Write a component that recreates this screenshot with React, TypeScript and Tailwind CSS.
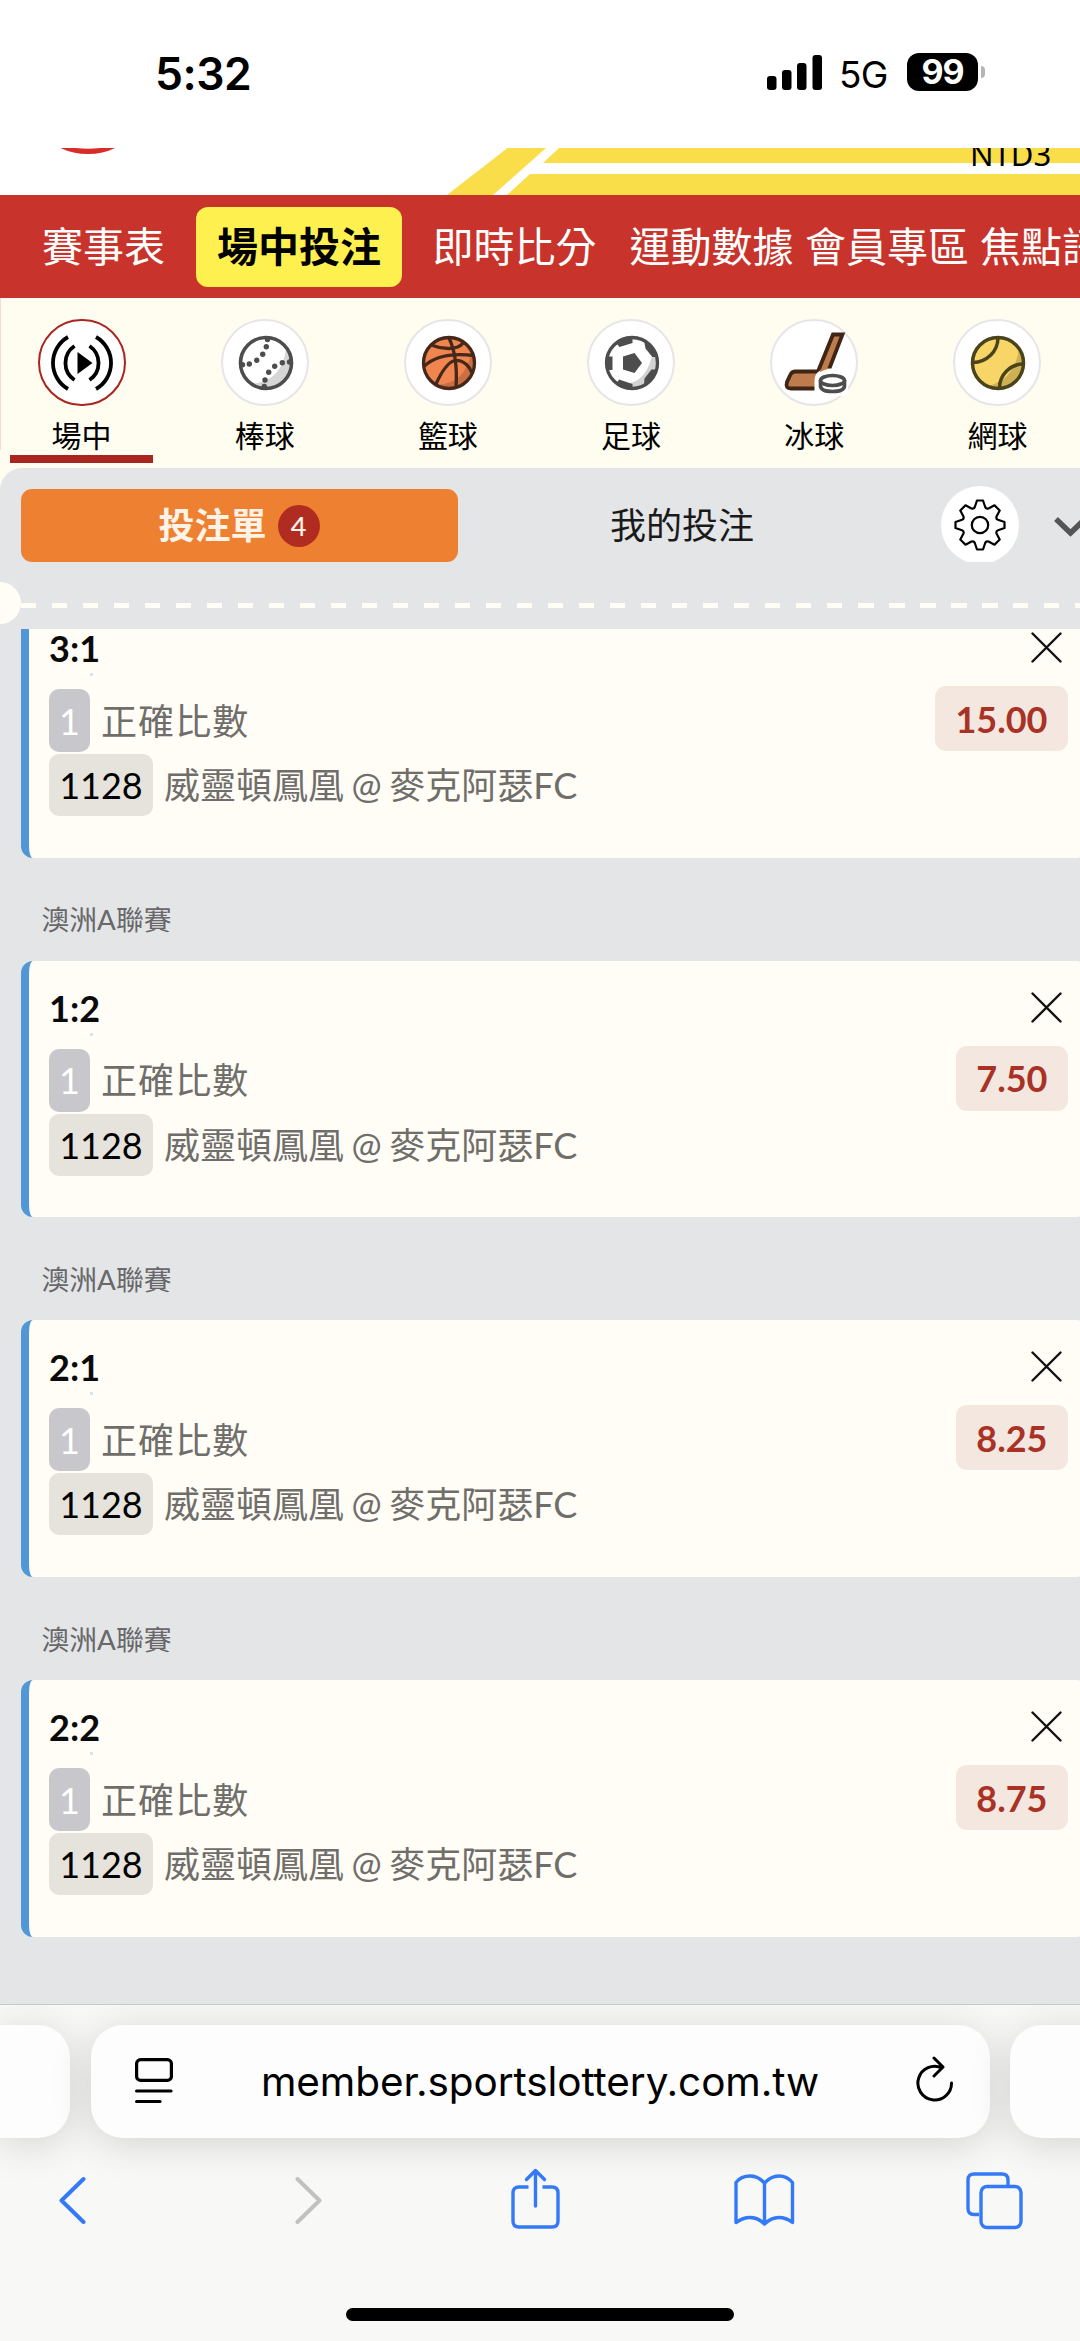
import React from "react";

const SANS = "font-['Lato','Noto_Sans_CJK_TC',sans-serif]";

const bets = [
  { score: "3:1", odds: "15.00" },
  { score: "1:2", odds: "7.50" },
  { score: "2:1", odds: "8.25" },
  { score: "2:2", odds: "8.75" },
];

function StatusBar() {
  return (
    <div className="flex h-[148px] shrink-0 items-start bg-white pl-[155px] pr-[95px] pt-[53px] font-['Inter',sans-serif] text-black">
      <div className="text-[44.500px] font-semibold leading-[42px] tracking-[-0.500px]">5:32</div>
      <svg className="ml-auto mt-[2px]" width="56" height="35" viewBox="0 0 56 35">
        <rect x="0" y="21" width="9.5" height="14" rx="3" />
        <rect x="15" y="15" width="9.5" height="20" rx="3" />
        <rect x="30" y="8" width="9.5" height="27" rx="3" />
        <rect x="45.500" y="0" width="9.5" height="35" rx="3" />
      </svg>
      <div className="ml-[16px] w-[68px] text-[37px] leading-[43px] tracking-[-0.800px]">5G</div>
      <div className="flex h-[38px] w-[71px] items-center justify-center rounded-[12px] bg-black text-[34px] font-bold leading-none tracking-[-1px] text-white">
        99
      </div>
      <div className="ml-[3px] mt-[13px] h-[12px] w-[4px] rounded-r-full bg-[#b5b5b5]" />
    </div>
  );
}

function Banner() {
  return (
    <div className="relative h-[47px] shrink-0 overflow-hidden bg-white">
      <svg className="block" width="1080" height="47" viewBox="0 0 1080 47">
        <path d="M507.500 0H546L493 47H447Z" fill="#f9de4a" />
        <path d="M559 0H1080V15H543Z" fill="#f9de4a" />
        <path d="M530 26H1080V47H507Z" fill="#f9de4a" />
        <path d="M60.500 0H115Q103 6 88 6Q73 6 60.500 0Z" fill="#d92b27" />
        <path d="M76 0H100Q88 1.500 76 0Z" fill="#fff" />
      </svg>
      <div className="absolute -top-[15px] left-[970px] font-['Noto_Sans',sans-serif] text-[31px] leading-[43px] text-black">
        NTD3
      </div>
    </div>
  );
}

function Nav() {
  return (
    <nav
      className={`flex h-[103px] shrink-0 items-center overflow-hidden whitespace-nowrap bg-[#c8342b] pl-[42px] text-[41px] leading-none text-white ${SANS}`}
    >
      <span className="w-[154px] shrink-0">賽事表</span>
      <span className="flex h-[80px] w-[206px] shrink-0 items-center justify-center rounded-[12px] bg-[#fef04e] font-bold text-black">
        場中投注
      </span>
      <span className="ml-[30.500px] w-[197px] shrink-0">即時比分</span>
      <span className="w-[175.500px] shrink-0">運動數據</span>
      <span className="w-[175px] shrink-0">會員專區</span>
      <span className="shrink-0">焦點訊息</span>
    </nav>
  );
}

function LiveIcon() {
  return (
    <svg width="62" height="56" viewBox="0 0 62 56" fill="none" stroke="#000" strokeWidth="3.800">
      <path d="M17 2A30 30 0 0 0 17 54M23.500 11A20.500 20.500 0 0 0 23.500 45M45 2A30 30 0 0 1 45 54M38.500 11A20.500 20.500 0 0 1 38.500 45" />
      <path d="M26.500 17L41.500 28L26.500 39Z" fill="#000" stroke="none" />
    </svg>
  );
}

function BaseballIcon() {
  return (
    <svg className="ml-[2px]" width="56" height="56" viewBox="0 0 56 56" fill="none">
      <circle cx="28" cy="28" r="25.500" fill="#fff" />
      <path d="M50 14A26 26 0 0 1 14 49Q44 46 48 14Z" fill="#d6d6d6" />
      <circle cx="28" cy="28" r="25.500" stroke="#4d4d4d" strokeWidth="3.600" />
      <g fill="#4d4d4d">
        <circle cx="29.500" cy="4.500" r="2.700" /><circle cx="28.300" cy="11.700" r="2.700" /><circle cx="24.700" cy="19.300" r="2.700" />
        <circle cx="18.700" cy="25.300" r="2.700" /><circle cx="11.300" cy="29" r="2.700" /><circle cx="4.500" cy="29.800" r="2.700" />
        <circle cx="51.500" cy="27" r="2.700" /><circle cx="44.300" cy="27.700" r="2.700" /><circle cx="36.700" cy="31.300" r="2.700" />
        <circle cx="30.700" cy="37.300" r="2.700" /><circle cx="27" cy="45" r="2.700" /><circle cx="26.300" cy="51.500" r="2.700" />
      </g>
    </svg>
  );
}

function BasketballIcon() {
  return (
    <svg className="ml-[2px]" width="56" height="56" viewBox="0 0 56 56" fill="none">
      <circle cx="28" cy="28" r="25.500" fill="#f0854f" />
      <path d="M53 22A25 25 0 0 1 16 50Q45 48 50 18Z" fill="#c96f42" />
      <g stroke="#45281a" strokeWidth="3.300">
        <circle cx="28" cy="28" r="25.500" />
        <path d="M28 3Q37 22 35 52M10 10C20 14 36 16 42 8M3.500 31C14 21 32 18 53 20.500M15 49C20 38 27 27 34 25.500C43 25 49 32 51 38" />
      </g>
    </svg>
  );
}

function SoccerIcon() {
  return (
    <svg className="ml-[2px]" width="56" height="56" viewBox="0 0 56 56" fill="none">
      <circle cx="28" cy="28" r="25.500" fill="#fff" />
      <path d="M50 16A25 25 0 0 1 26 53V48Q44 44 49 16Z" fill="#d3d3d3" />
      <g fill="#4d4d4d">
        <path d="M19 21.500L30.500 18L38 28L30.500 38L19 34.500Z" />
        <path d="M13 9Q20 3 28.500 2.500V8L15.500 12Z" />
        <path d="M40 5Q50 11 53.500 22L48.300 22L41.500 13.500Z" />
        <path d="M53.500 34.500Q50 46 40 51L40.500 43.500L47.500 34.500Z" />
        <path d="M13 47.500Q20 53 28.500 53.500V49L15 44.500Z" />
        <path d="M2.500 21.500H8.500V35H2.500Z" />
      </g>
      <circle cx="28" cy="28" r="25.500" stroke="#4d4d4d" strokeWidth="3.300" />
    </svg>
  );
}

function HockeyIcon() {
  return (
    <svg width="68" height="66" viewBox="-2 0 68 66" fill="none">
      <path d="M51 4.500H60.500L46 42Q42 58 34 58.500H9Q3 58.500 5 52L8.500 44.500Q10 41.500 13.500 41.500H36Z" fill="#be7c4c" stroke="#3e2516" strokeWidth="3.800" />
      <path d="M32.500 66V50Q33 38 50 38.500H66V66Z" fill="#fff" />
      <path d="M38.500 39.500L44 37.500L50 38.500Q42 39 38 42.500Z" fill="#be7c4c" />
      <path d="M38.500 50V56Q39 61.500 50.500 61.500Q62 61.500 62.500 56V50" fill="#fff" stroke="#4d4d4d" strokeWidth="3.600" />
      <ellipse cx="50.500" cy="50.500" rx="12" ry="5" fill="#fff" stroke="#4d4d4d" strokeWidth="3.600" />
    </svg>
  );
}

function TennisIcon() {
  return (
    <svg className="ml-[2px]" width="56" height="56" viewBox="0 0 56 56" fill="none">
      <circle cx="28" cy="28" r="25.500" fill="#f7d667" />
      <path d="M51 16A26 26 0 0 1 17 51Q44 46 49 14Z" fill="#cfb155" />
      <g stroke="#4b431c" strokeWidth="3.500">
        <circle cx="28" cy="28" r="25.500" />
        <path d="M28 3A25 25 0 0 1 3 27.500M53 29A24 24 0 0 0 29.500 53" />
      </g>
    </svg>
  );
}

const sports = [
  { label: "場中", Icon: LiveIcon, active: true },
  { label: "棒球", Icon: BaseballIcon },
  { label: "籃球", Icon: BasketballIcon },
  { label: "足球", Icon: SoccerIcon },
  { label: "冰球", Icon: HockeyIcon },
  { label: "網球", Icon: TennisIcon },
];

function Sports() {
  return (
    <div className={`relative flex h-[170px] shrink-0 overflow-hidden bg-[#fffcf0] pl-[10px] pt-[21px] ${SANS}`}>
      <div className="absolute left-0 top-0 h-[152px] w-px bg-[#f3dcd2]" />
      {sports.map(({ label, Icon, active }) => (
        <div key={label} className="mr-[40.200px] flex w-[143px] shrink-0 flex-col items-center">
          <div
            className={
              active
                ? "flex h-[87px] w-[88px] items-center justify-center rounded-full border-[2.500px] border-[#ab2520] bg-white"
                : "flex h-[87px] w-[88px] items-center justify-center rounded-full border-[2.500px] border-[#e6e6e8] bg-white"
            }
          >
            <Icon />
          </div>
          <div className="mt-[11px] text-[30px] leading-[36px] text-black">{label}</div>
          {active && <div className="mt-[2px] h-[8px] w-full bg-[#ab2520]" />}
        </div>
      ))}
    </div>
  );
}

function GearIcon() {
  return (
    <svg width="54" height="54" viewBox="-27 -27 54 54" fill="none" stroke="#000" strokeWidth="2.200" strokeLinejoin="round">
      <path d="M-3 -24.500H3L5.200 -18Q6 -15.800 8.500 -16.500L14.500 -19.700L19.700 -14.500L16.500 -8.500Q15.800 -6 18 -5.200L24.500 -3V3L18 5.200Q15.800 6 16.500 8.500L19.700 14.500L14.500 19.700L8.500 16.500Q6 15.800 5.200 18L3 24.500H-3L-5.200 18Q-6 15.800 -8.500 16.500L-14.500 19.700L-19.700 14.500L-16.500 8.500Q-15.800 6 -18 5.200L-24.500 3V-3L-18 -5.200Q-15.800 -6 -16.500 -8.500L-19.700 -14.500L-14.500 -19.700L-8.500 -16.500Q-6 -15.800 -5.200 -18Z" />
      <circle r="8.200" />
    </svg>
  );
}

function SlipHeader() {
  return (
    <div className={`flex h-[94px] shrink-0 items-center overflow-hidden pl-[20.500px] ${SANS}`}>
      <div className="mt-[21px] flex h-[73px] w-[437px] shrink-0 items-center justify-center rounded-[11px] bg-[#ee8131] text-[36px] font-bold leading-none text-[#fff3e8]">
        <span className="-mt-px">投注單</span>
        <span className="ml-[11px] flex h-[42px] w-[42px] items-center justify-center rounded-full bg-[#b02c20] pb-px text-[27px] font-medium text-[#fff3e8]">
          4
        </span>
      </div>
      <div className="mt-[19px] w-[449px] shrink-0 text-center text-[36px] leading-none text-[#1a1a1a]">我的投注</div>
      <div className="ml-[34.500px] mt-[20px] flex h-[78px] w-[78px] shrink-0 items-center justify-center rounded-full bg-white">
        <GearIcon />
      </div>
      <svg className="ml-[35px] mt-[23px] shrink-0" width="34" height="20" viewBox="0 0 34 20" fill="none" stroke="#555" strokeWidth="5.500">
        <path d="M2 2L16.500 16L31 2" />
      </svg>
    </div>
  );
}

function BetCard({ score, odds }: { score: string; odds: string }) {
  return (
    <div className="flex h-[256.500px] w-[1067px] shrink-0 rounded-[12px] border-l-8 border-[#5197d6] bg-[#fffdf6]">
      <div className="w-[700px] pl-[20.500px] pt-[26px]">
        <div className="relative h-[62px] text-[36px] font-bold leading-[42px] text-[#0a0a0a]">
          {score}
          <div className="absolute left-[41px] top-[46px] h-[3px] w-[3px] bg-[#d5e6f2]" />
        </div>
        <div className="flex items-center text-[36px] leading-none text-[#6f6e6a]">
          <span className="flex h-[63px] w-[41px] items-center justify-center rounded-[10px] bg-[#c8c7cc] text-white">1</span>
          <span className="ml-[11px] tracking-[1.100px]">正確比數</span>
        </div>
        <div className="mt-[2px] flex items-center text-[36px] leading-none text-[#6f6e6a]">
          <span className="flex h-[62px] w-[104px] items-center justify-center rounded-[10px] bg-[#e5e3dc] text-black">1128</span>
          <span className="ml-[11px] whitespace-nowrap [word-spacing:-1.700px]">威靈頓鳳凰 @ 麥克阿瑟FC</span>
        </div>
      </div>
      <div className="ml-auto mr-[19.500px] flex flex-col items-end pt-[31px]">
        <svg className="mr-[6px]" width="31" height="31" viewBox="0 0 31 31" stroke="#111" strokeWidth="2.400" strokeLinecap="round">
          <path d="M1.500 1.500L29.500 29.500M29.500 1.500L1.500 29.500" />
        </svg>
        <div className="mt-[23px] flex h-[65px] items-center rounded-[11px] bg-[#f4e7df] px-[20.500px] text-[36px] font-bold leading-none text-[#a83226]">
          {odds}
        </div>
      </div>
    </div>
  );
}

function BetList() {
  return (
    <div className={`flex h-[1375px] shrink-0 flex-col overflow-hidden pl-[20.500px] ${SANS}`}>
      <div className="-mt-[28px]" />
      {bets.map((b, i) => (
        <React.Fragment key={b.score}>
          {i > 0 && (
            <div className="flex h-[103.200px] shrink-0 items-center pl-[21px] pt-[22px] text-[27.800px] leading-none text-[#68686a]">
              澳洲A聯賽
            </div>
          )}
          <BetCard score={b.score} odds={b.odds} />
        </React.Fragment>
      ))}
    </div>
  );
}

function Perforation() {
  return (
    <div className="relative h-[67px] shrink-0 overflow-hidden">
      <div className="absolute -left-[21px] top-[20px] h-[42px] w-[42px] rounded-full bg-[#fffdf6]" />
      <div className="ml-[20.700px] mt-[41px] h-[5px] bg-[repeating-linear-gradient(90deg,#fffdf6_0_15.500px,transparent_15.500px_31px)]" />
    </div>
  );
}

function BrowserBar() {
  const card = "h-[113px] shrink-0 bg-[#fdfdfd] shadow-[0_6px_40px_rgba(0,0,0,0.15)]";
  return (
    <div className="flex h-[337px] shrink-0 flex-col overflow-hidden border-t border-[#c9c9cb] bg-[#f8f8f6] font-['Inter',sans-serif]">
      <div className="mt-[19.500px] flex shrink-0 gap-[20.500px]">
        <div className={`w-[70px] rounded-r-[32px] ${card}`} />
        <div className={`flex w-[899px] items-center rounded-[32px] pl-[44px] pr-[36px] ${card}`}>
          <svg width="38" height="46" viewBox="0 0 38 46" fill="none" stroke="#000" strokeWidth="3.200" strokeLinecap="round">
            <rect x="1.600" y="1.600" width="34.800" height="20.800" rx="4" />
            <path d="M1.600 33H36M1.600 43.500H25" />
          </svg>
          <div className="flex-1 pr-[8px] pt-[3px] text-center text-[40.500px] leading-none text-black">
            <span className="tracking-[-0.100px]">member.sportslottery.com.tw</span>
          </div>
          <svg className="-mt-[5px]" width="38" height="46" viewBox="0 0 38 46" fill="none" stroke="#000" strokeWidth="3" strokeLinecap="round" strokeLinejoin="round">
            <path d="M35.500 27A16.800 16.800 0 1 1 26 12M18 2L27 11L18 20" />
          </svg>
        </div>
        <div className={`w-[100px] rounded-l-[32px] ${card}`} />
      </div>
      <div className="flex h-[92px] shrink-0 items-start pl-[59px] pt-[30px]">
        <svg className="mt-[8px] shrink-0" width="27" height="48" viewBox="0 0 27 48" fill="none" stroke="#347af8" strokeWidth="4" strokeLinecap="round" strokeLinejoin="round">
          <path d="M24.500 3L2.500 24.500L24.500 46" />
        </svg>
        <svg className="ml-[209px] mt-[8px] shrink-0" width="27" height="48" viewBox="0 0 27 48" fill="none" stroke="#c1c1bf" strokeWidth="4" strokeLinecap="round" strokeLinejoin="round">
          <path d="M2.500 3L24.500 24.500L2.500 46" />
        </svg>
        <svg className="ml-[189px] shrink-0" width="49" height="62" viewBox="0 0 49 62" fill="none" stroke="#347af8" strokeWidth="3.400" strokeLinecap="round" strokeLinejoin="round">
          <path strokeLinecap="butt" d="M17.500 19H8Q2 19 2 25V53Q2 59 8 59H41Q47 59 47 53V25Q47 19 41 19H31.500" />
          <path d="M24.500 38V2.500M15.500 11.500L24.500 2.500L33.500 11.500" />
        </svg>
        <svg className="ml-[174px] mt-[6px] shrink-0" width="61" height="52" viewBox="0 0 61 52" fill="none" stroke="#347af8" strokeWidth="3.400" strokeLinecap="round" strokeLinejoin="round">
          <path d="M30.500 9Q24 2 16 2Q7 2 2 8.500V48.500Q9 43.500 16 43.500Q24 43.500 30.500 50Q37 43.500 45 43.500Q52 43.500 58.500 48.500V8.500Q53 2 45 2Q37 2 30.500 9ZM30.500 9V49" />
        </svg>
        <svg className="ml-[171px] mt-[4px] shrink-0" width="58" height="58" viewBox="0 0 58 58" fill="none" stroke="#347af8" strokeWidth="3.400">
          <path d="M13 42.500H8Q2 42.500 2 36.500V8Q2 2 8 2H36Q42 2 42 8V13" />
          <rect x="15" y="14.500" width="40" height="41" rx="6" />
        </svg>
      </div>
      <div className="mx-auto mt-[78px] h-[13px] w-[388px] shrink-0 rounded-full bg-black" />
    </div>
  );
}

export default function App() {
  return (
    <div className="flex h-[2341px] w-[1080px] flex-col overflow-hidden bg-white">
      <StatusBar />
      <Banner />
      <Nav />
      <Sports />
      <div className="shrink-0 bg-[#fffcf0]">
        <div className="flex flex-col rounded-tl-[22px] bg-[#e4e5e7]">
          <SlipHeader />
          <Perforation />
          <BetList />
        </div>
      </div>
      <BrowserBar />
    </div>
  );
}
